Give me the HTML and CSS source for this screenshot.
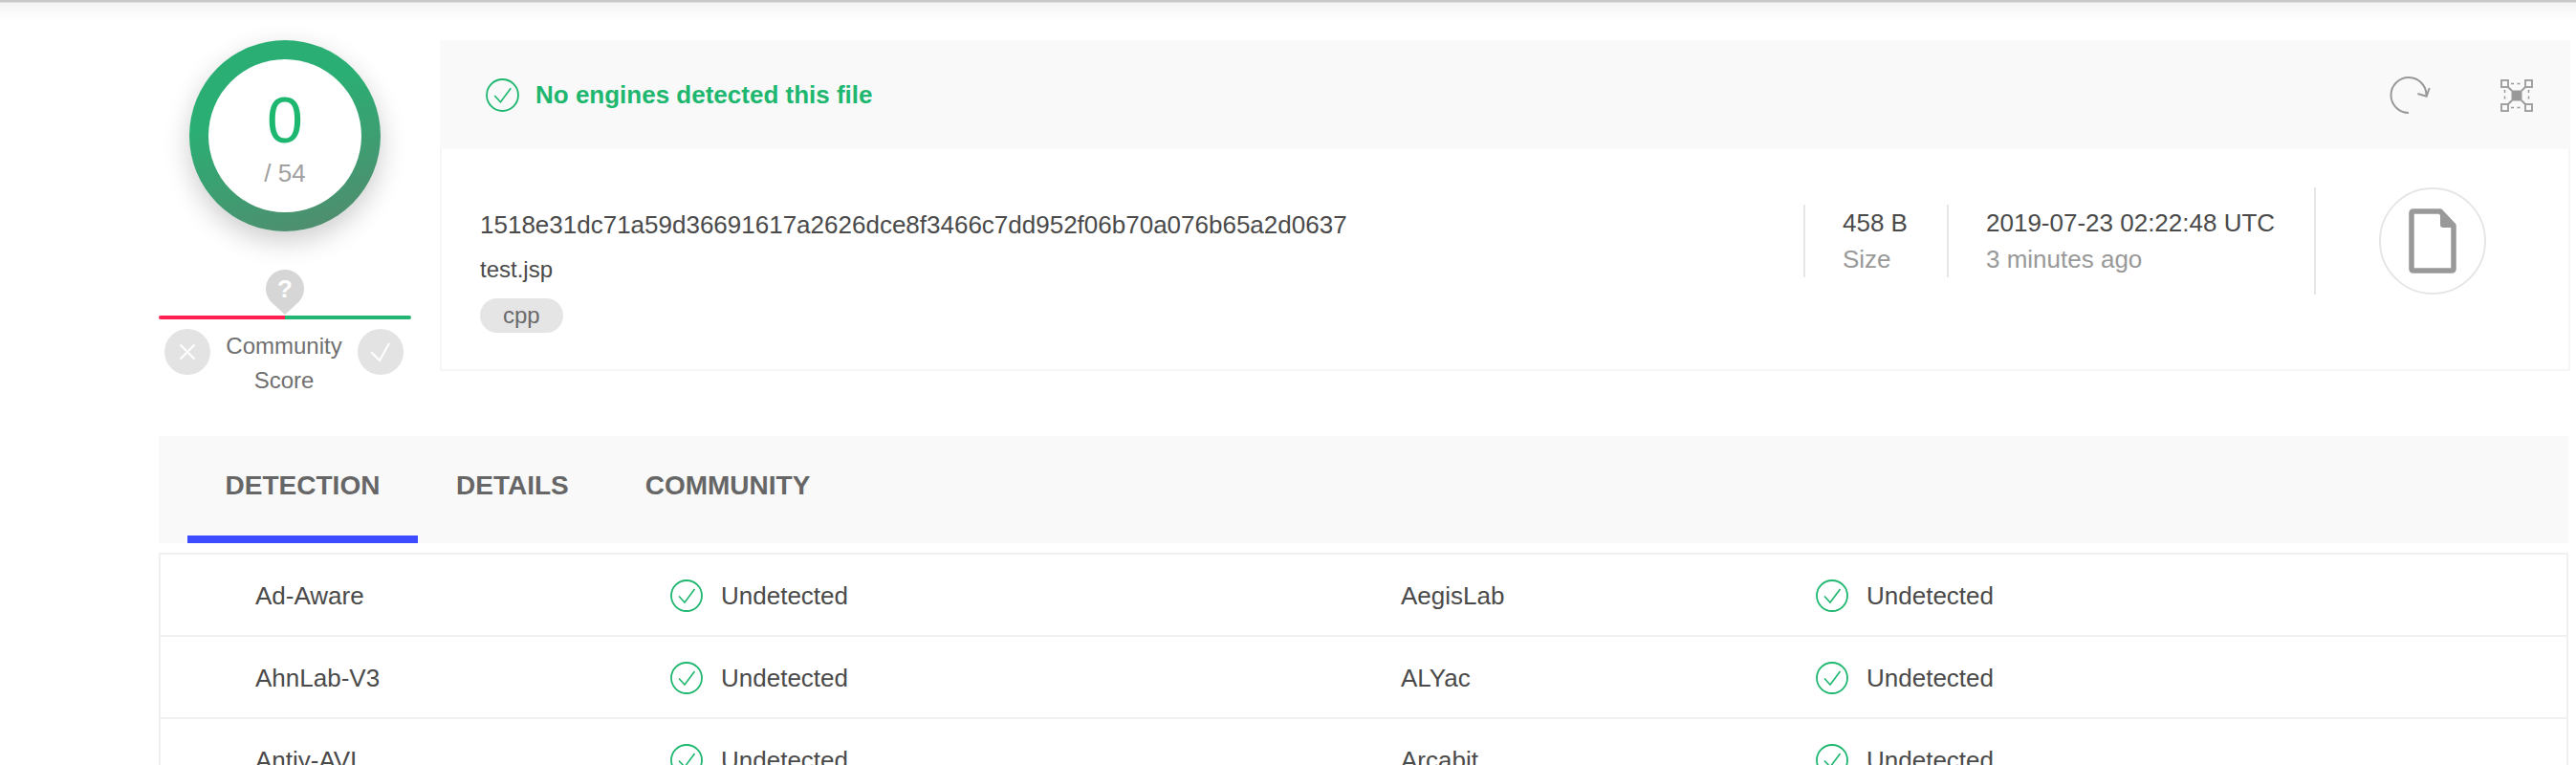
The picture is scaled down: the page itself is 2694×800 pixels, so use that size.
FILE: index.html
```html
<!DOCTYPE html>
<html lang="en">

<head>
    <meta charset="UTF-8">
    <title>File report</title>
    <link rel="stylesheet" href="styles.css">
</head>

<body>
    <div class="topShadow"></div>

    <div class="page">
        <div class="overview">
            <div class="scoreColumn">
                <div class="scoreRing">
                    <div class="scoreInner">
                        <div class="scoreValue">0</div>
                        <div class="scoreTotal">/ 54</div>
                    </div>
                </div>

                <div class="community">
                    <svg class="pin" width="40" height="48" viewBox="0 0 40 48">
                        <path d="M20 47 L5.8 34 A20 20 0 1 1 34.2 34 Z" fill="#d6d6d6" />
                        <text x="20" y="29" text-anchor="middle" class="pinMark">?</text>
                    </svg>
                    <div class="voteBar">
                        <div class="voteBad"></div>
                        <div class="voteGood"></div>
                    </div>
                    <div class="voteRow">
                        <div class="voteButton">
                            <svg width="48" height="48" viewBox="0 0 48 48" fill="none" stroke="#fff" stroke-width="2">
                                <path d="M16.5 16.5 L31.5 31.5 M31.5 16.5 L16.5 31.5" />
                            </svg>
                        </div>
                        <div class="voteLabel">Community<br>Score</div>
                        <div class="voteButton">
                            <svg width="48" height="48" viewBox="0 0 48 48" fill="none" stroke="#fff" stroke-width="2">
                                <path d="M14 24 L23 33 L33 15" />
                            </svg>
                        </div>
                    </div>
                </div>
            </div>

            <div class="fileCard">
                <div class="cardHead">
                    <svg class="checkIcon" width="35" height="35" viewBox="0 0 34 34" fill="none" stroke="#1eb76f">
                        <circle cx="17" cy="17" r="16" stroke-width="1.8" />
                        <path d="M9 17.5 L15 24 L25.5 10" stroke-width="1.6" />
                    </svg>
                    <span class="headText">No engines detected this file</span>
                    <div class="headTools">
                        <svg class="reloadIcon" width="44" height="40" viewBox="0 0 44 40" fill="none" stroke="#999" stroke-width="2">
                            <path d="M21 38 A18.5 18.5 0 1 1 39.5 20" />
                            <path d="M30.5 18 L39.7 20.7 L42.7 12" />
                        </svg>
                        <svg width="34" height="34" viewBox="0 0 34 34" fill="none" stroke="#999" stroke-width="1.8">
                            <rect x="1" y="1" width="7" height="7" />
                            <rect x="26" y="1" width="7" height="7" />
                            <rect x="1" y="26" width="7" height="7" />
                            <rect x="26" y="26" width="7" height="7" />
                            <rect x="11.5" y="11.5" width="11" height="11" fill="#999" stroke="none" />
                            <path d="M8 8 L12 12 M26 8 L22 12 M8 26 L12 22 M26 26 L22 22" />
                            <path d="M11 4.5 H24 M11 29.5 H24 M4.5 11 V24 M29.5 11 V24" stroke-width="1.5" stroke-dasharray="3 3.5" />
                        </svg>
                    </div>
                </div>
                <div class="cardBody">
                    <div class="fileInfo">
                        <div class="fileHash">1518e31dc71a59d36691617a2626dce8f3466c7dd952f06b70a076b65a2d0637</div>
                        <div class="fileName">test.jsp</div>
                        <span class="fileTag">cpp</span>
                    </div>
                    <div class="fileMeta">
                        <div class="stat statSize">
                            <div class="statValue">458 B</div>
                            <div class="statLabel">Size</div>
                        </div>
                        <div class="stat statDate">
                            <div class="statValue">2019-07-23 02:22:48 UTC</div>
                            <div class="statLabel">3 minutes ago</div>
                        </div>
                        <div class="fileType">
                            <div class="fileCircle">
                                <svg width="50" height="68" viewBox="0 0 50 68" fill="none" stroke="#999" stroke-width="5.5" stroke-linejoin="round">
                                    <path d="M3 5 Q3 3 5 3 H33 L47 18 V63 Q47 65 45 65 H5 Q3 65 3 63 Z" />
                                    <path d="M33 2 L49 18 V20 H36 Q33 20 33 17 Z" fill="#999" stroke="none" />
                                </svg>
                            </div>
                        </div>
                    </div>
                </div>
            </div>
        </div>

        <div class="tabs">
            <div class="tab tabActive">DETECTION</div>
            <div class="tab">DETAILS</div>
            <div class="tab">COMMUNITY</div>
        </div>

        <div class="results">
            <div class="resultRow">
                <div class="engine">Ad-Aware</div>
                <div class="verdict">
                    <svg width="34" height="34" viewBox="0 0 34 34" fill="none" stroke="#1eb76f">
                        <circle cx="17" cy="17" r="16" stroke-width="1.8" />
                        <path d="M9 17.5 L15 24 L25.5 10" stroke-width="1.6" />
                    </svg>
                    Undetected
                </div>
                <div class="engine">AegisLab</div>
                <div class="verdict">
                    <svg width="34" height="34" viewBox="0 0 34 34" fill="none" stroke="#1eb76f">
                        <circle cx="17" cy="17" r="16" stroke-width="1.8" />
                        <path d="M9 17.5 L15 24 L25.5 10" stroke-width="1.6" />
                    </svg>
                    Undetected
                </div>
            </div>
            <div class="resultRow">
                <div class="engine">AhnLab-V3</div>
                <div class="verdict">
                    <svg width="34" height="34" viewBox="0 0 34 34" fill="none" stroke="#1eb76f">
                        <circle cx="17" cy="17" r="16" stroke-width="1.8" />
                        <path d="M9 17.5 L15 24 L25.5 10" stroke-width="1.6" />
                    </svg>
                    Undetected
                </div>
                <div class="engine">ALYac</div>
                <div class="verdict">
                    <svg width="34" height="34" viewBox="0 0 34 34" fill="none" stroke="#1eb76f">
                        <circle cx="17" cy="17" r="16" stroke-width="1.8" />
                        <path d="M9 17.5 L15 24 L25.5 10" stroke-width="1.6" />
                    </svg>
                    Undetected
                </div>
            </div>
            <div class="resultRow">
                <div class="engine">Antiy-AVL</div>
                <div class="verdict">
                    <svg width="34" height="34" viewBox="0 0 34 34" fill="none" stroke="#1eb76f">
                        <circle cx="17" cy="17" r="16" stroke-width="1.8" />
                        <path d="M9 17.5 L15 24 L25.5 10" stroke-width="1.6" />
                    </svg>
                    Undetected
                </div>
                <div class="engine">Arcabit</div>
                <div class="verdict">
                    <svg width="34" height="34" viewBox="0 0 34 34" fill="none" stroke="#1eb76f">
                        <circle cx="17" cy="17" r="16" stroke-width="1.8" />
                        <path d="M9 17.5 L15 24 L25.5 10" stroke-width="1.6" />
                    </svg>
                    Undetected
                </div>
            </div>
        </div>
    </div>
</body>

</html>
```

FILE: styles.css
```css
html,
body {
    height: 800px;
    overflow: hidden;
}

body {
    margin: 0;
    background-color: #fff;
    color: #4a4a4a;
    font-family: "Liberation Sans", Arial, sans-serif;
    font-size: 26px;
}

.topShadow {
    height: 42px;
    background: linear-gradient(to bottom, #c8c8c8 0, #c8c8c8 2px, #f4f4f4 3px, #fff 22px);
}

.page {
    width: 2522px;
    margin-left: 166px;
}

.overview {
    display: flex;
    gap: 30px;
}

/* left column */
.scoreColumn {
    width: 264px;
    flex-shrink: 0;
}

.scoreRing {
    width: 200px;
    height: 200px;
    margin-left: 32px;
    padding: 20px;
    box-sizing: border-box;
    border-radius: 50%;
    background: linear-gradient(160deg, #2bae73 35%, #55886f 100%);
    box-shadow: 0 10px 28px rgba(0, 0, 0, 0.2);
}

.scoreInner {
    height: 160px;
    border-radius: 50%;
    background-color: #fff;
    text-align: center;
}

.scoreValue {
    padding-top: 25px;
    color: #1eb76f;
    font-size: 68px;
    line-height: 76px;
}

.scoreTotal {
    margin-top: 3px;
    color: #a0a0a0;
    font-size: 26px;
    line-height: 30px;
}

.community {
    margin-top: 40px;
}

.pin {
    display: block;
    margin-left: 112px;
}

.pinMark {
    fill: #fff;
    font-size: 26px;
    font-weight: bold;
}

.voteBar {
    display: flex;
    height: 4px;
}

.voteBad {
    flex: 1;
    background-color: #ff1f50;
    border-radius: 2px 0 0 2px;
}

.voteGood {
    flex: 1;
    background-color: #22b573;
    border-radius: 0 2px 2px 0;
}

.voteRow {
    display: flex;
    justify-content: space-between;
    margin-top: 10px;
    padding: 0 8px 0 6px;
}

.voteButton {
    width: 48px;
    height: 48px;
    border-radius: 50%;
    background-color: #e3e3e3;
}

.voteLabel {
    color: #707070;
    font-size: 24px;
    line-height: 36px;
    text-align: center;
}

/* file card */
.fileCard {
    flex: 1;
    height: 346px;
}

.cardHead {
    display: flex;
    align-items: center;
    height: 114px;
    padding: 0 39px 0 48px;
    background-color: #f9f9f9;
}

.checkIcon {
    margin-right: 17px;
}

.headText {
    color: #1eb76f;
    font-weight: bold;
}

.headTools {
    display: flex;
    align-items: center;
    gap: 73px;
    margin-left: auto;
    padding-top: 2px;
}

.cardBody {
    display: flex;
    height: 232px;
    box-sizing: border-box;
    border: 2px solid #f6f6f6;
    border-top: none;
}

.fileInfo {
    padding: 61px 0 0 40px;
}

.fileHash {
    line-height: 36px;
}

.fileName {
    margin-top: 11px;
    font-size: 24px;
    line-height: 36px;
}

.fileTag {
    display: inline-block;
    margin-top: 12px;
    padding: 0 24px;
    border-radius: 18px;
    background-color: #e5e5e5;
    color: #6a6a6a;
    font-size: 24px;
    line-height: 36px;
}

.fileMeta {
    display: flex;
    align-items: center;
    align-self: flex-start;
    margin-left: auto;
    padding-top: 40px;
}

.stat {
    box-sizing: border-box;
    height: 76px;
    padding-left: 39px;
    border-left: 2px solid #e6e6e6;
    line-height: 38px;
}

.statSize {
    width: 150px;
}

.statDate {
    width: 384px;
}

.statLabel {
    color: #999;
}

.fileType {
    box-sizing: border-box;
    width: 266px;
    height: 112px;
    padding-left: 66px;
    border-left: 2px solid #e6e6e6;
}

.fileCircle {
    display: flex;
    align-items: center;
    justify-content: center;
    box-sizing: border-box;
    width: 112px;
    height: 112px;
    border: 2px solid #e6e6e6;
    border-radius: 50%;
}

/* tabs */
.tabs {
    display: flex;
    height: 112px;
    margin: 40px 2px 0 0;
    padding-left: 30px;
    background-color: #f9f9f9;
}

.tab {
    box-sizing: border-box;
    height: 112px;
    padding: 0 40px;
    color: #666;
    font-size: 28px;
    font-weight: bold;
    line-height: 104px;
}

.tabActive {
    width: 241px;
    padding: 0;
    text-align: center;
    border-bottom: 8px solid #3d4cff;
}

/* results */
.results {
    margin: 10px 2px 0 0;
    border: 2px solid #f0f0f0;
}

.resultRow {
    display: grid;
    grid-template-columns: 434px 764px 434px 1fr;
    align-items: center;
    height: 86px;
    box-sizing: border-box;
    padding: 2px 0 0 99px;
    border-bottom: 2px solid #f0f0f0;
}

.verdict {
    display: flex;
    align-items: center;
    gap: 19px;
}
```
